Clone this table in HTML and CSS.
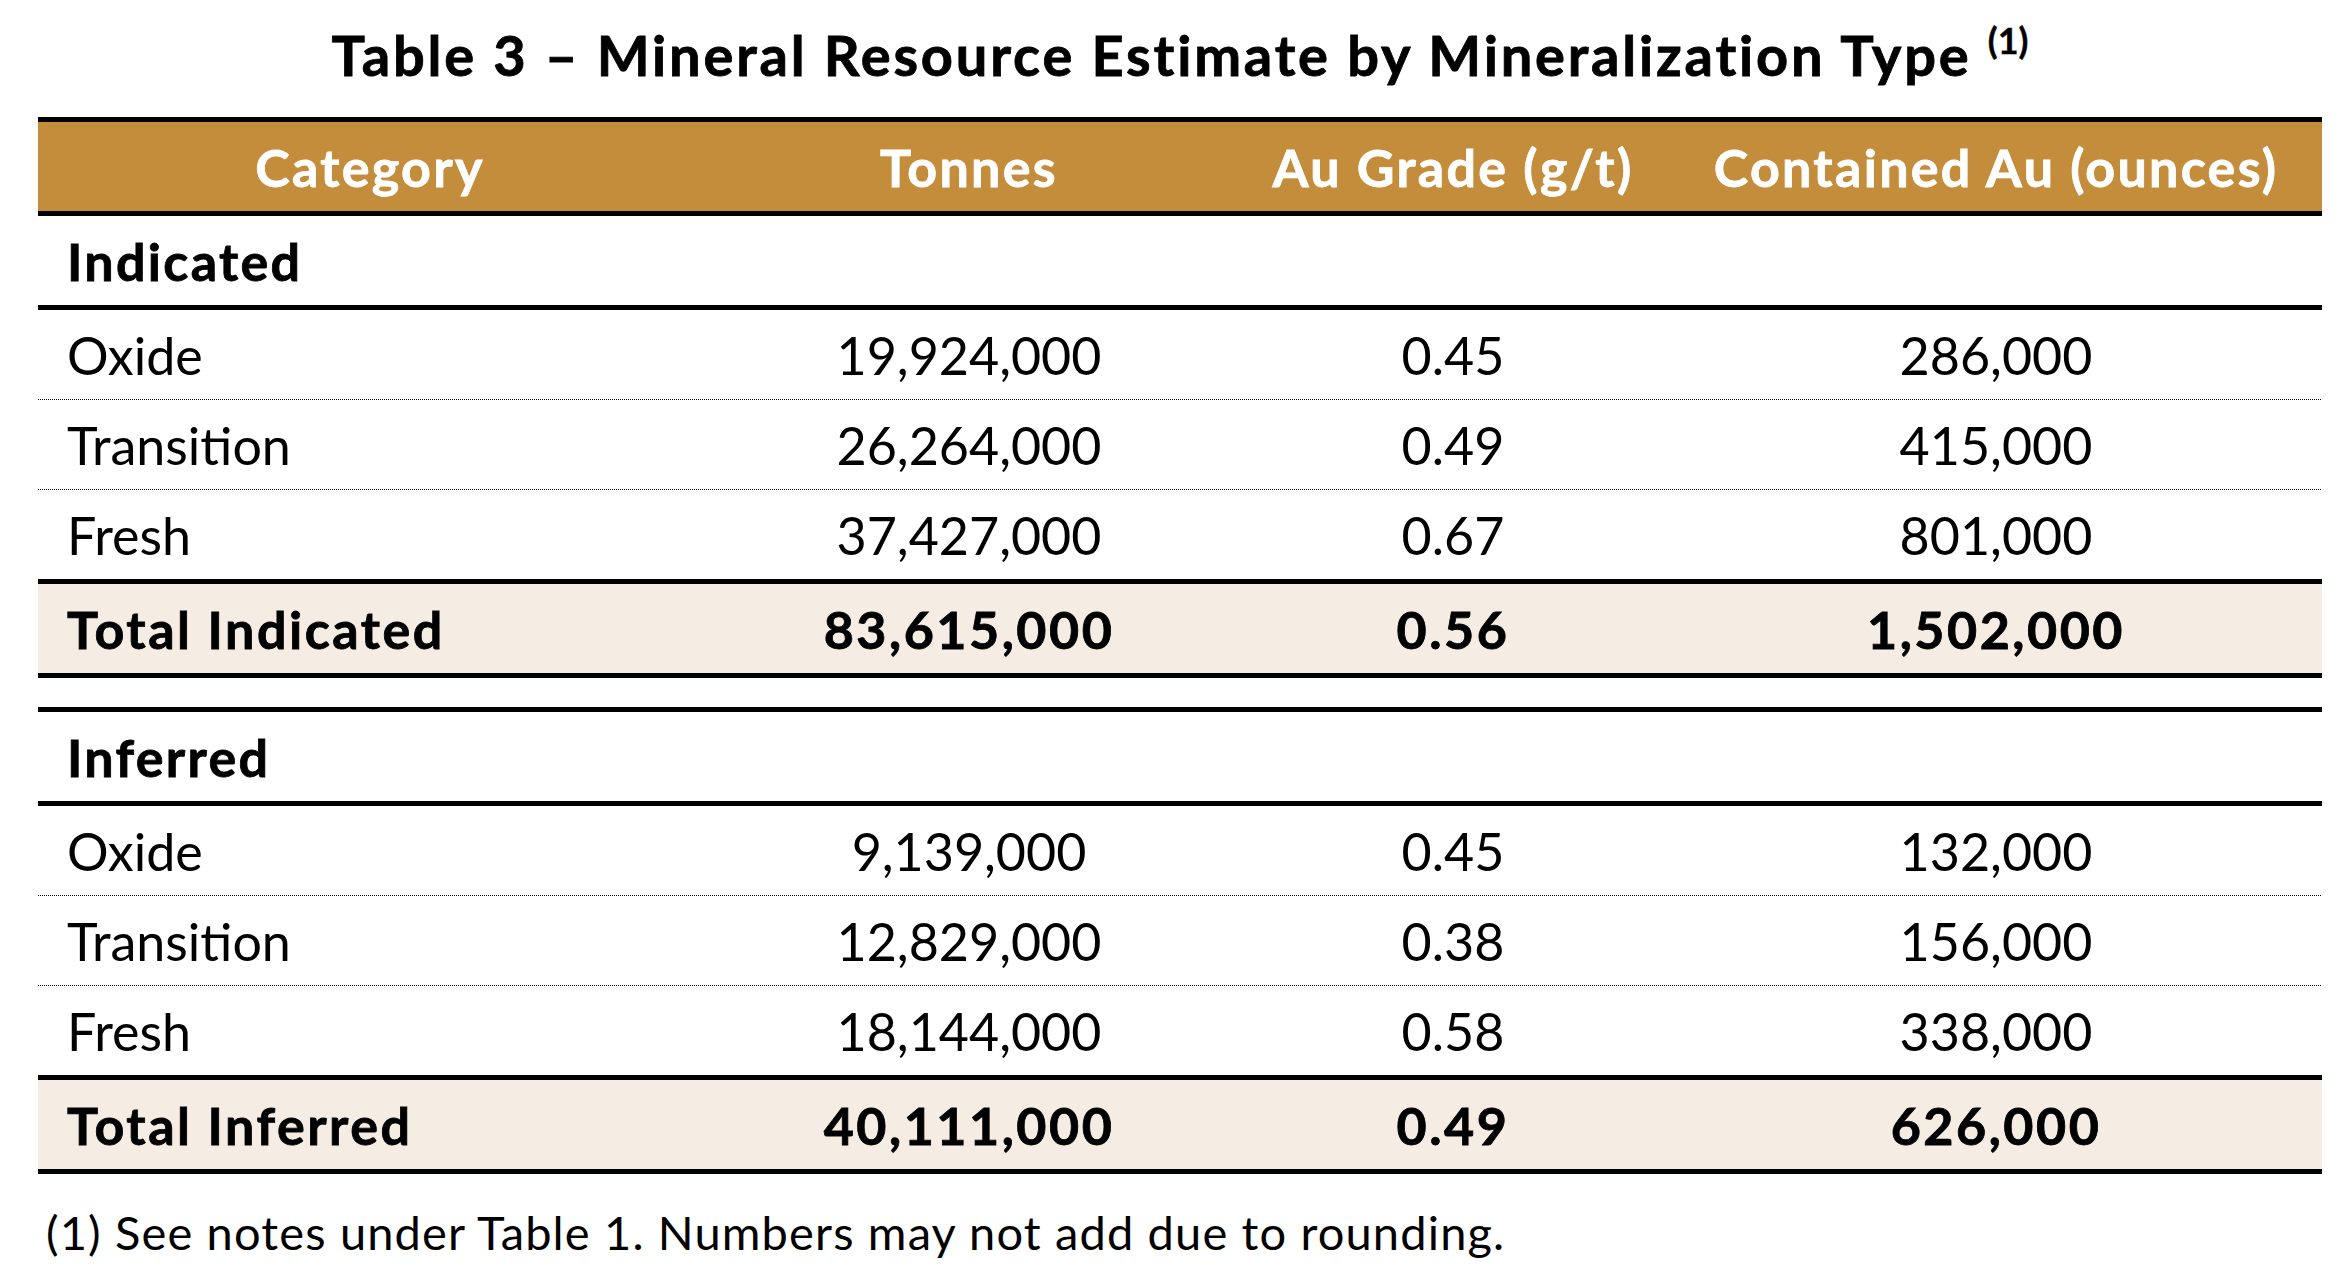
FILE: index.html
```html
<!DOCTYPE html>
<html lang="en">
<head>
<meta charset="utf-8">
<title>Table 3 – Mineral Resource Estimate by Mineralization Type</title>
<link rel="stylesheet" href="styles.css">
</head>
<body>
<div class="sheet">
  <h1 class="title">Table 3 – Mineral Resource Estimate by Mineralization Type <sup class="note">(1)</sup></h1>
  <table class="mre">
    <colgroup>
      <col class="c-cat">
      <col class="c-ton">
      <col class="c-grade">
      <col class="c-oz">
    </colgroup>
    <thead>
      <tr class="head">
        <th>Category</th>
        <th>Tonnes</th>
        <th>Au Grade (g/t)</th>
        <th>Contained Au (ounces)</th>
      </tr>
    </thead>
    <tbody>
      <tr class="section"><td>Indicated</td><td></td><td></td><td></td></tr>
      <tr class="row"><td>Oxide</td><td>19,924,000</td><td>0.45</td><td>286,000</td></tr>
      <tr class="row"><td>Transition</td><td>26,264,000</td><td>0.49</td><td>415,000</td></tr>
      <tr class="row last"><td>Fresh</td><td>37,427,000</td><td>0.67</td><td>801,000</td></tr>
      <tr class="total"><td>Total Indicated</td><td>83,615,000</td><td>0.56</td><td>1,502,000</td></tr>
      <tr class="gap"><td colspan="4"></td></tr>
      <tr class="section"><td>Inferred</td><td></td><td></td><td></td></tr>
      <tr class="row"><td>Oxide</td><td>9,139,000</td><td>0.45</td><td>132,000</td></tr>
      <tr class="row"><td>Transition</td><td>12,829,000</td><td>0.38</td><td>156,000</td></tr>
      <tr class="row last"><td>Fresh</td><td>18,144,000</td><td>0.58</td><td>338,000</td></tr>
      <tr class="total"><td>Total Inferred</td><td>40,111,000</td><td>0.49</td><td>626,000</td></tr>
    </tbody>
  </table>
  <p class="footnote">(1) See notes under Table 1. Numbers may not add due to rounding.</p>
</div>
</body>
</html>
```
FILE: styles.css
```css
html, body {
  margin: 0;
  padding: 0;
  background: #ffffff;
}
body {
  font-family: Lato, "Open Sans", "Liberation Sans", sans-serif;
  color: #000000;
}
.sheet {
  width: 2284px;
  margin-left: 38px;
  padding-top: 20px;
}
.title {
  margin: 0;
  height: 97px;
  font-size: 56px;
  line-height: 70px;
  font-weight: 700;
  letter-spacing: 2.8px;
  text-align: center;
  -webkit-text-stroke: 0.8px #000;
}
.title .note {
  font-size: 36px;
  font-weight: 700;
  letter-spacing: 0;
  vertical-align: 22px;
  line-height: 0;
  -webkit-text-stroke: 0.4px #000;
}
.mre {
  width: 2284px;
  border-collapse: collapse;
  table-layout: fixed;
}
.c-cat { width: 664px; }
.c-ton { width: 534px; }
.c-grade { width: 434px; }
.c-oz { width: 652px; }
.mre th,
.mre td {
  padding: 0;
  height: 89px;
  text-align: center;
  vertical-align: middle;
  font-size: 52px;
  line-height: 60px;
}
.mre td:first-child {
  text-align: left;
  padding-left: 29px;
}
.head {
  background: #c38d3c;
  border-top: 5px solid #000;
  border-bottom: 5px solid #000;
}
.head th {
  color: #ffffff;
  font-weight: 700;
  letter-spacing: 2.3px;
  text-align: center;
  -webkit-text-stroke: 0.8px #ffffff;
}
.section {
  border-top: 5px solid #000;
  border-bottom: 5px solid #000;
}
.section td {
  font-weight: 700;
  letter-spacing: 2.3px;
  -webkit-text-stroke: 0.8px #000;
}
.row {
  background-image: linear-gradient(to right, #000 50%, transparent 50%);
  background-size: 2px 1px;
  background-position: left bottom;
  background-repeat: repeat-x;
}
.row td {
  font-weight: 400;
  height: 90px;
}
.row.last {
  background-image: none;
  border-bottom: 5px solid #000;
}
.row.last td {
  height: 89px;
}
.total {
  background: #f5ede3;
  border-top: 5px solid #000;
  border-bottom: 5px solid #000;
}
.total td {
  font-weight: 700;
  letter-spacing: 2.5px;
  -webkit-text-stroke: 0.8px #000;
}
.gap td {
  height: 29px;
  padding: 0;
  line-height: 0;
}
.footnote {
  margin: 28px 0 0 8px;
  font-size: 47px;
  letter-spacing: 1.15px;
  line-height: 60px;
  font-weight: 400;
}
```
